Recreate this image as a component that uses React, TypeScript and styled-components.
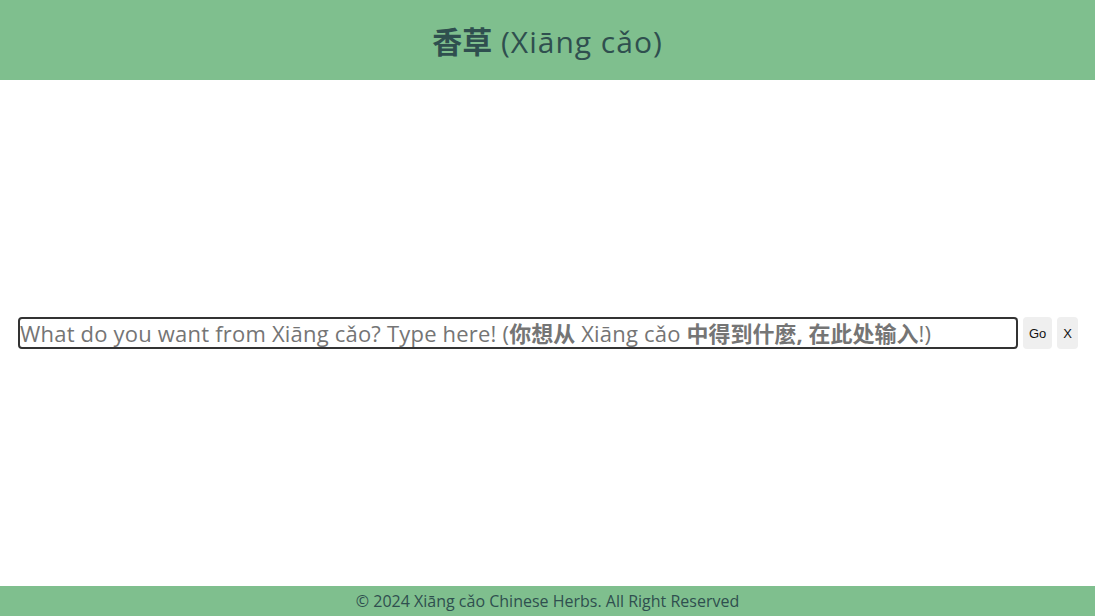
import React from "react";
import styled, { createGlobalStyle } from "styled-components";

const FONT = `"Open Sans", "Noto Sans CJK SC", sans-serif`;

const Global = createGlobalStyle`
  html, body { margin: 0; padding: 0; height: 100%; }
  body { font-family: ${FONT}; background: #fff; }
  #root { height: 100%; }
`;

const Page = styled.div`
  display: flex;
  flex-direction: column;
  height: 100vh;
`;

const Header = styled.header`
  height: 80px;
  background: #7fbf8e;
  display: flex;
  align-items: center;
  justify-content: center;
`;

const Title = styled.h1`
  margin: 0;
  font-size: 30px;
  font-weight: 500;
  letter-spacing: 1px;
  color: #2f4f4f;
  font-family: ${FONT};
`;

const Han = styled.span`
  font-weight: 700;
  letter-spacing: 0;
`;

const Main = styled.main`
  flex: 1;
  display: flex;
  align-items: center;
  padding: 0 17px 0 18px;
  gap: 5px;
`;

const Field = styled.div`
  position: relative;
  flex: 1;
  display: flex;
`;

const Input = styled.input`
  flex: 1;
  height: 32px;
  box-sizing: border-box;
  border: 2px solid #333;
  border-radius: 4px;
  padding: 0 2px;
  font-size: 22px;
  font-family: ${FONT};
  color: #222;
  outline: none;
`;

const Hint = styled.span`
  position: absolute;
  left: 2px;
  top: 0;
  height: 32px;
  line-height: 32px;
  font-size: 22px;
  font-weight: 500;
  letter-spacing: 0.2px;
  color: #757575;
  pointer-events: none;
  white-space: nowrap;
  overflow: hidden;
`;

const HintHan = styled.span`
  font-weight: 700;
  letter-spacing: 0;
`;

const Button = styled.button`
  height: 32px;
  padding: 0 6px;
  border: none;
  border-radius: 4px;
  background: #efefef;
  color: #111;
  font-family: "Liberation Sans", Arial, sans-serif;
  font-size: 13px;
`;

const Footer = styled.footer`
  height: 30px;
  background: #7fbf8e;
  display: flex;
  align-items: center;
  justify-content: center;
  color: #2f4f4f;
  font-size: 16px;
`;

export default function App() {
  const [value, setValue] = React.useState("");
  return (
    <Page>
      <Global />
      <Header>
        <Title>
          <Han>香草</Han> (Xiāng cǎo)
        </Title>
      </Header>
      <Main>
        <Field>
          <Input value={value} onChange={(e) => setValue(e.target.value)} aria-label="search" />
          {value === "" && (
            <Hint>
              What do you want from Xiāng cǎo? Type here! (<HintHan>你想从</HintHan> Xiāng cǎo{" "}
              <HintHan>中得到什麼, 在此处输入</HintHan>!)
            </Hint>
          )}
        </Field>
        <Button>Go</Button>
        <Button>X</Button>
      </Main>
      <Footer>© 2024 Xiāng cǎo Chinese Herbs. All Right Reserved</Footer>
    </Page>
  );
}
